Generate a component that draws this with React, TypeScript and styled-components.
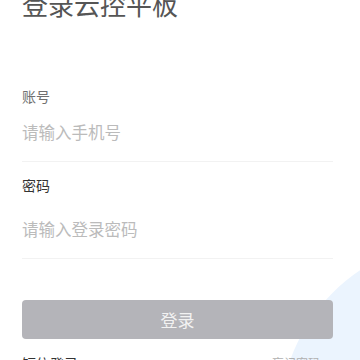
import styled, { createGlobalStyle } from 'styled-components';

const GlobalStyle = createGlobalStyle`
  html, body {
    margin: 0;
    padding: 0;
    background: #ffffff;
    font-family: "Noto Sans CJK SC", "Noto Sans", sans-serif;
  }
`;

const Page = styled.div`
  position: relative;
  width: 360px;
  height: 360px;
  overflow: hidden;
  background: #ffffff;
`;

// soft blue circle in the bottom right corner
const Blob = styled.div`
  position: absolute;
  left: 280px;
  top: 240px;
  width: 360px;
  height: 360px;
  border-radius: 50%;
  background: #ebf4fe;
`;

const Content = styled.div`
  position: relative;
  display: flex;
  flex-direction: column;
  padding: 0 27px 0 22px;
`;

const Title = styled.h1`
  margin: -9px 0 0;
  font-size: 26px;
  line-height: 26px;
  font-weight: 400;
  color: #555555;
`;

const Field = styled.div<{ $top: number; $gap: number }>`
  display: flex;
  flex-direction: column;
  gap: ${({ $gap }) => $gap}px;
  margin-top: ${({ $top }) => $top}px;
  padding-bottom: 17px;
  border-bottom: 1px solid #f2f2f2;
`;

const Label = styled.div<{ $dark?: boolean }>`
  font-size: 14px;
  line-height: 20px;
  color: ${({ $dark }) => ($dark ? '#333333' : '#707070')};
`;

const Input = styled.input`
  border: none;
  outline: none;
  padding: 0;
  margin: 0;
  height: 24px;
  font-family: inherit;
  font-size: 16.5px;
  color: #333;
  background: transparent;
  &::placeholder {
    color: #bbbbbb;
  }
`;

const Button = styled.button`
  margin-top: 41px;
  height: 39px;
  border: none;
  border-radius: 4px;
  background: #b4b4b9;
  color: #f2f2f2;
  font-family: inherit;
  font-size: 17px;
`;

const Footer = styled.div`
  display: flex;
  justify-content: space-between;
  align-items: center;
  margin-top: 14px;
  line-height: 20px;
`;

const Link = styled.span<{ $muted?: boolean }>`
  font-size: ${({ $muted }) => ($muted ? '12px' : '14px')};
  margin-right: ${({ $muted }) => ($muted ? '13px' : '0')};
  color: ${({ $muted }) => ($muted ? '#b0b0b0' : '#333333')};
`;

export default function App() {
  return (
    <>
      <GlobalStyle />
      <Page>
        <Blob />
        <Content>
          <Title>登录云控平板</Title>
          <Field $top={69} $gap={14}>
            <Label>账号</Label>
            <Input placeholder="请输入手机号" />
          </Field>
          <Field $top={13} $gap={22}>
            <Label $dark>密码</Label>
            <Input type="password" placeholder="请输入登录密码" />
          </Field>
          <Button>登录</Button>
          <Footer>
            <Link>短信登录</Link>
            <Link $muted>忘记密码</Link>
          </Footer>
        </Content>
      </Page>
    </>
  );
}
